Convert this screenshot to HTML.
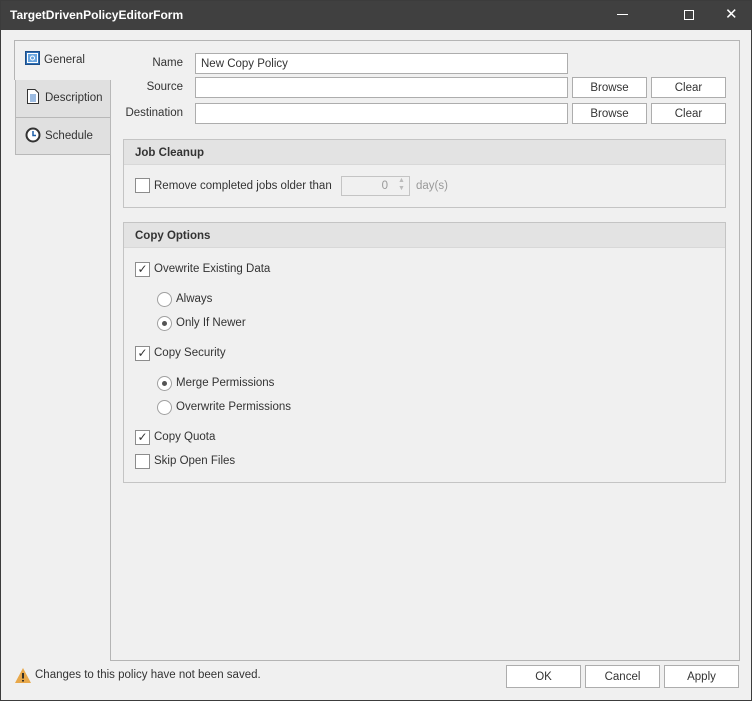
<!DOCTYPE html>
<html><head><meta charset="utf-8"><style>
*{box-sizing:border-box;margin:0;padding:0}
body{width:752px;height:701px;background:#f0f0f0;font-family:"Liberation Sans",sans-serif;font-size:11.5px;color:#333;position:relative;overflow:hidden}
.a{position:absolute}
.title{left:0;top:0;width:752px;height:30px;background:#404040;color:#fff;font-weight:bold;font-size:12px;line-height:30px;padding-left:10px}
.inp{background:#fff;border:1px solid #adadad;height:21px;line-height:20px;padding-left:5px}
.btn{background:#fff;border:1px solid #adadad;text-align:center;height:21px;line-height:20px}
.lbl{text-align:right;line-height:21px}
.grp{border:1px solid #c4c4c4}
.gh{background:#e3e3e3;height:25px;line-height:26px;font-weight:bold;padding-left:11px;border-bottom:1px solid #d8d8d8}
.cb{width:15px;height:15px;border:1px solid #8c8c8c;background:#fff;font-size:12px;line-height:13px;text-align:center;color:#333}
.rb{width:15px;height:15px;border:1px solid #a0a0a0;border-radius:50%;background:#fff}
.rb.on::after{content:"";position:absolute;left:4px;top:4px;width:5px;height:5px;border-radius:50%;background:#555}
.t{line-height:17px}
.tab{border:1px solid #b8b8b8;background:#e0e0e0}
</style></head><body>
<div class="a title">TargetDrivenPolicyEditorForm</div>
<div class="a" style="left:0;top:0;width:752px;height:701px;border:1px solid #3c3c3c;pointer-events:none"></div>
<div class="a" style="left:617px;top:14px;width:11px;height:1px;background:#fff"></div>
<div class="a" style="left:684px;top:10px;width:10px;height:10px;border:1px solid #fff"></div>
<div class="a" style="left:725px;top:5px;color:#fff;font-size:15px">✕</div>

<div class="a" style="left:110px;top:40px;width:630px;height:621px;border:1px solid #b4b4b4"></div>
<div class="a tab" style="left:15px;top:79px;width:96px;height:39px"></div>
<div class="a tab" style="left:15px;top:117px;width:96px;height:38px"></div>
<div class="a" style="left:14px;top:40px;width:97px;height:40px;background:#f0f0f0;border:1px solid #b4b4b4;border-right:none;border-bottom:none"></div>
<svg class="a" style="left:25px;top:51px" width="15" height="15"><rect x="0.5" y="0.5" width="14" height="13" fill="#2f6fb4" stroke="#1d4f8a"/><rect x="2.5" y="2.5" width="10" height="9" fill="#6aa6e0" stroke="#fff"/><circle cx="7.5" cy="7" r="2" fill="none" stroke="#fff"/></svg>
<div class="a t" style="left:44px;top:52px">General</div>
<svg class="a" style="left:27px;top:89px" width="12" height="15"><path d="M0.5 0.5H8L11.5 4V14.5H0.5Z" fill="#fff" stroke="#333"/><path d="M3 6H9M3 8H9M3 10H9M3 12H9" stroke="#3b78c4"/></svg>
<div class="a t" style="left:45px;top:90px">Description</div>
<svg class="a" style="left:25px;top:127px" width="16" height="16"><circle cx="8" cy="8" r="6.5" fill="#fff" stroke="#333" stroke-width="2"/><path d="M8 4V8.5H11" fill="none" stroke="#1d5fa8" stroke-width="1.5"/></svg>
<div class="a t" style="left:45px;top:128px">Schedule</div>

<div class="a lbl" style="left:120px;top:53px;width:63px">Name</div>
<div class="a lbl" style="left:120px;top:77px;width:63px">Source</div>
<div class="a lbl" style="left:110px;top:103px;width:73px">Destination</div>
<div class="a inp" style="left:195px;top:53px;width:373px">New Copy Policy</div>
<div class="a inp" style="left:195px;top:77px;width:373px"></div>
<div class="a inp" style="left:195px;top:103px;width:373px"></div>
<div class="a btn" style="left:572px;top:77px;width:75px">Browse</div>
<div class="a btn" style="left:651px;top:77px;width:75px">Clear</div>
<div class="a btn" style="left:572px;top:103px;width:75px">Browse</div>
<div class="a btn" style="left:651px;top:103px;width:75px">Clear</div>

<div class="a grp" style="left:123px;top:139px;width:603px;height:69px"><div class="gh">Job Cleanup</div></div>
<div class="a cb" style="left:135px;top:178px"></div>
<div class="a t" style="left:154px;top:178px">Remove completed jobs older than</div>
<div class="a" style="left:341px;top:176px;width:69px;height:20px;border:1px solid #c4c4c4;background:#f0f0f0;color:#999;text-align:right;padding-right:21px;line-height:19px">0</div>
<div class="a" style="left:398px;top:177px;color:#bbb;font-size:7px;line-height:8px">▲<br>▼</div>
<div class="a t" style="left:416px;top:178px;color:#999">day(s)</div>

<div class="a grp" style="left:123px;top:222px;width:603px;height:261px"><div class="gh">Copy Options</div></div>
<div class="a cb" style="left:135px;top:262px">✓</div><div class="a t" style="left:154px;top:261px">Ovewrite Existing Data</div>
<div class="a rb" style="left:157px;top:292px"></div><div class="a t" style="left:176px;top:291px">Always</div>
<div class="a rb on" style="left:157px;top:316px"></div><div class="a t" style="left:176px;top:315px">Only If Newer</div>
<div class="a cb" style="left:135px;top:346px">✓</div><div class="a t" style="left:154px;top:345px">Copy Security</div>
<div class="a rb on" style="left:157px;top:376px"></div><div class="a t" style="left:176px;top:375px">Merge Permissions</div>
<div class="a rb" style="left:157px;top:400px"></div><div class="a t" style="left:176px;top:399px">Overwrite Permissions</div>
<div class="a cb" style="left:135px;top:430px">✓</div><div class="a t" style="left:154px;top:429px">Copy Quota</div>
<div class="a cb" style="left:135px;top:454px"></div><div class="a t" style="left:154px;top:453px">Skip Open Files</div>

<svg class="a" style="left:14px;top:667px" width="18" height="17"><path d="M9 1L17 16H1Z" fill="#e8a84a"/><path d="M9 6V11.5M9 13V14.5" stroke="#222" stroke-width="1.8"/></svg>
<div class="a t" style="left:35px;top:667px">Changes to this policy have not been saved.</div>
<div class="a btn" style="left:506px;top:665px;width:75px;height:23px;line-height:23px">OK</div>
<div class="a btn" style="left:585px;top:665px;width:75px;height:23px;line-height:23px">Cancel</div>
<div class="a btn" style="left:664px;top:665px;width:75px;height:23px;line-height:23px">Apply</div>
</body></html>
